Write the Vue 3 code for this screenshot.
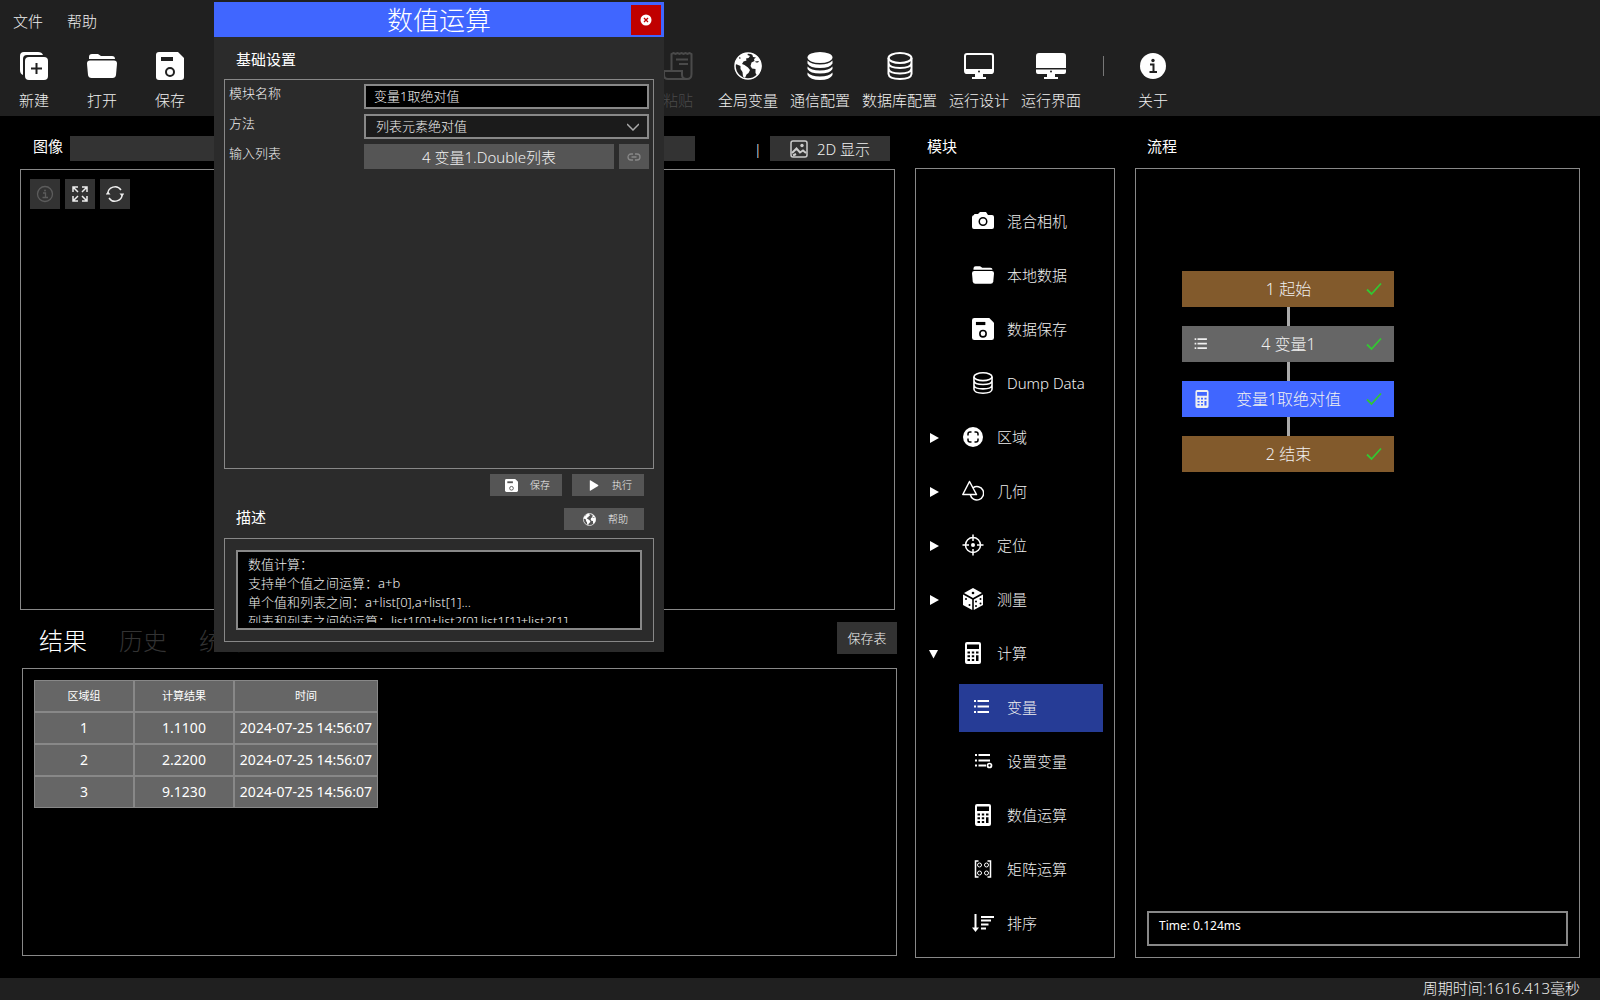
<script setup>
import { ref } from 'vue'

const menus = ['文件', '帮助']
const fileTools = [
  { icon: 'new', label: '新建' },
  { icon: 'folder', label: '打开' },
  { icon: 'save', label: '保存' }
]
const systemTools = [
  { icon: 'paste', label: '粘贴', disabled: true },
  { icon: 'globe', label: '全局变量' },
  { icon: 'db-solid', label: '通信配置' },
  { icon: 'db', label: '数据库配置' },
  { icon: 'monitor', label: '运行设计' },
  { icon: 'monitor-solid', label: '运行界面' }
]
const modules = [
  { icon: 'camera', label: '混合相机', child: true },
  { icon: 'folder', label: '本地数据', child: true },
  { icon: 'save', label: '数据保存', child: true },
  { icon: 'db', label: 'Dump Data', child: true },
  { icon: 'region', label: '区域' },
  { icon: 'shapes', label: '几何' },
  { icon: 'target', label: '定位' },
  { icon: 'dice', label: '测量' },
  { icon: 'calc', label: '计算', open: true },
  { icon: 'list', label: '变量', child: true },
  { icon: 'list-gear', label: '设置变量', child: true },
  { icon: 'calc', label: '数值运算', child: true },
  { icon: 'matrix', label: '矩阵运算', child: true },
  { icon: 'sort', label: '排序', child: true }
]
const selectedModule = ref('变量')
const nodes = [
  { label: '1 起始', kind: 'edge' },
  { label: '4 变量1', kind: 'step', icon: 'list' },
  { label: '变量1取绝对值', kind: 'active', icon: 'calc' },
  { label: '2 结束', kind: 'edge' }
]
const results = [
  { id: 1, value: '1.1100', time: '2024-07-25 14:56:07' },
  { id: 2, value: '2.2200', time: '2024-07-25 14:56:07' },
  { id: 3, value: '9.1230', time: '2024-07-25 14:56:07' }
]
const tabs = ['结果', '历史', '统计']
const activeTab = ref('结果')
const moduleName = ref('变量1取绝对值')
const description = ref(
  '数值计算：\n支持单个值之间运算：a+b\n单个值和列表之间：a+list[0],a+list[1]...\n列表和列表之间的运算：list1[0]+list2[0],list1[1]+list2[1]'
)
</script>

<template>
  <svg class="sprite" aria-hidden="true">
    <symbol id="i-new" viewBox="0 0 28 28">
      <path fill="currentColor" d="M3 23Q0 22 0 18V4Q0 0 4 0H18Q22 0 23 3H7Q3 3 3 7Z" />
      <rect x="5" y="5" width="23" height="23" rx="4" fill="currentColor" />
      <path stroke="var(--cut)" stroke-width="2" d="M16.500 11v11M11 16.500h11" />
    </symbol>
    <symbol id="i-folder" viewBox="0 0 30 28">
      <path fill="currentColor" d="M2 7V5Q2 2 5 2H11L14 4H25Q28 4 28 7Z" />
      <path fill="currentColor" d="M3 8.500H27Q30 8.500 30 11.500L29 23Q28.500 26 25.500 26H4.500Q1.500 26 1 23L0 11.500Q0 8.500 3 8.500Z" />
    </symbol>
    <symbol id="i-save" viewBox="0 0 28 28">
      <path fill="currentColor" d="M3 0H22L28 6V25Q28 28 25 28H3Q0 28 0 25V3Q0 0 3 0Z" />
      <path fill="var(--cut)" d="M5 5H17V9H5Z" />
      <circle cx="14" cy="20" r="4" fill="none" stroke="var(--cut)" stroke-width="2" />
    </symbol>
    <symbol id="i-paste" viewBox="0 0 30 28">
      <path fill="none" stroke="currentColor" stroke-width="2" d="M8.500 18V2l2-1 2 1 2-1 2 1 2-1 2 1 2-1 2 1 2-1 2 1V22Q28.500 27 24 27H5Q1 27 1 23V19H19V23Q19 27 24 27M13 7.500H25M16 12H25" />
    </symbol>
    <symbol id="i-globe" viewBox="0 0 28 28">
      <circle cx="14" cy="14" r="13" fill="none" stroke="currentColor" stroke-width="1.500" />
      <path fill="currentColor" d="M1 12Q3 4 10 1.500L14 1L13.500 3L16 4L14.500 6L12 6.500L12.500 8.500L9.500 9.500L8 12L10.500 13L14 15.500L16 18L14.500 21L12.500 22.500L11 26L9 24.500L8.500 20L6.500 17L6.500 14L3 12.500Z" />
      <path fill="currentColor" d="M18 1.500Q25 4 27 11L27.500 14Q27 20 23 23.500L21.500 21L21.500 17L18 16.500L16.500 14L17.500 10.500L20.500 9L20 7L22 5.500L19 5Z" />
      <path fill="var(--cut)" d="M21 9.500L25 9L24 10.500L22 10.500ZM5 5L7 6L5.500 7Z" />
    </symbol>
    <symbol id="i-db-solid" viewBox="0 0 26 28">
      <ellipse cx="13" cy="5.500" rx="12.500" ry="5.500" fill="currentColor" />
      <path fill="currentColor" d="M.5 8.500Q4 12.500 13 12.500T25.500 8.500V11.500Q23 16 13 16T.5 11.500ZM.5 14.500Q4 18.500 13 18.500T25.500 14.500V17Q23 21.500 13 21.500T.5 17ZM.5 20.500Q4 24.500 13 24.500T25.500 20.500V23Q23 28 13 28T.5 23Z" />
    </symbol>
    <symbol id="i-db" viewBox="0 0 26 28">
      <g fill="none" stroke="currentColor" stroke-width="2">
        <ellipse cx="13" cy="6" rx="11.500" ry="5" />
        <path d="M1.500 6V22Q2 27 13 27T24.500 22V6M1.500 11Q2 16 13 16T24.500 11M1.500 16.500Q2 21.500 13 21.500T24.500 16.500" />
      </g>
    </symbol>
    <symbol id="i-monitor" viewBox="0 0 30 28">
      <rect x="1" y="2" width="28" height="19" rx="2" fill="none" stroke="currentColor" stroke-width="2" />
      <path fill="currentColor" d="M1 17H29V20Q29 22 27 22H3Q1 22 1 20ZM11 22H19V25H22V27H8V25H11Z" />
      <circle cx="15" cy="19.500" r="1" fill="var(--cut)" />
    </symbol>
    <symbol id="i-monitor-solid" viewBox="0 0 30 28">
      <path fill="currentColor" d="M3 1H27Q30 1 30 4V16H0V4Q0 1 3 1ZM0 17.500H30V20Q30 22 28 22H2Q0 22 0 20ZM11 22H19V25H22V27H8V25H11Z" />
      <circle cx="15" cy="19.500" r="1" fill="var(--cut)" />
    </symbol>
    <symbol id="i-info" viewBox="0 0 28 28">
      <circle cx="14" cy="14" r="13" fill="currentColor" />
      <circle cx="14" cy="8.500" r="1.700" fill="var(--cut)" />
      <path fill="none" stroke="var(--cut)" stroke-width="2" d="M11 12.500H14.500V19.500M10.500 20H18" />
    </symbol>
    <symbol id="i-info-line" viewBox="0 0 18 18">
      <g fill="none" stroke="currentColor" stroke-width="1.300">
        <circle cx="9" cy="9" r="7.500" />
        <path d="M7 8H9.500V12.500M6.500 12.500H12" />
      </g>
      <circle cx="9" cy="5.500" r="1" fill="currentColor" />
    </symbol>
    <symbol id="i-expand" viewBox="0 0 18 18">
      <path fill="none" stroke="currentColor" stroke-width="1.500" d="M7 7L2 2M2 7V2H7M11 7L16 2M11 2H16V7M7 11L2 16M2 11V16H7M11 11L16 16M16 11V16H11" />
    </symbol>
    <symbol id="i-refresh" viewBox="0 0 18 18">
      <path fill="none" stroke="currentColor" stroke-width="1.400" d="M1.800 9A7.200 7.200 0 0 1 15 5M16.200 9A7.200 7.200 0 0 1 3 13" />
      <path fill="currentColor" d="M-.5 9.500H4.500L2 6.500ZM13.500 8.500H18.500L16 11.500Z" />
    </symbol>
    <symbol id="i-image" viewBox="0 0 18 18">
      <rect x="1" y="1" width="16" height="16" rx="2" fill="none" stroke="currentColor" stroke-width="1.500" />
      <circle cx="12" cy="5.500" r="1.700" fill="currentColor" />
      <path fill="none" stroke="currentColor" stroke-width="2" d="M2 13L6.500 8.500L10 12.500L13 10.500L16 13M3 15.500L6 14" />
    </symbol>
    <symbol id="i-camera" viewBox="0 0 22 22">
      <path fill="currentColor" fill-rule="evenodd" d="M2 5Q2 3.500 3.500 4H6L8 2H14L16 5H20Q22 5 22 7V17Q22 19 20 19H2Q0 19 0 17V7Q0 5.500 2 5ZM11 7A4.500 4.500 0 1 0 11 16A4.500 4.500 0 1 0 11 7Z" />
      <circle cx="11" cy="11.500" r="3" fill="currentColor" />
    </symbol>
    <symbol id="i-region" viewBox="0 0 22 22">
      <circle cx="11" cy="11" r="10" fill="currentColor" />
      <path fill="none" stroke="var(--cut)" stroke-width="1.500" d="M6 9.500V8Q6 6 8 6H9.500M12.500 6H14Q16 6 16 8V9.500M16 12.500V14Q16 16 14 16H12.500M9.500 16H8Q6 16 6 14V12.500" />
    </symbol>
    <symbol id="i-shapes" viewBox="0 0 22 22">
      <g fill="none" stroke="currentColor" stroke-width="1.500">
        <path d="M7.500 1.500L14.500 14.500H.8Z" stroke-linejoin="round" />
        <path d="M11 7.800A6.700 6.700 0 1 1 8.300 14.500" />
      </g>
    </symbol>
    <symbol id="i-target" viewBox="0 0 22 22">
      <g fill="none" stroke="currentColor" stroke-width="1.500">
        <circle cx="11" cy="11" r="7.500" />
        <path d="M11 .5V7M11 15V21.500M.5 11H7M15 11H21.500" />
      </g>
      <circle cx="11" cy="11" r="2" fill="currentColor" />
    </symbol>
    <symbol id="i-dice" viewBox="0 0 22 22">
      <path fill="currentColor" d="M11 0L20 5L11 10L2 5ZM1 6.500L10.200 11.500V22L1 17ZM21 6.500L11.800 11.500V22L21 17Z" />
      <g fill="var(--cut)">
        <circle cx="11" cy="5" r="1.300" /><circle cx="4" cy="11" r="1" /><circle cx="7.500" cy="17" r="1" />
        <circle cx="14" cy="13.500" r="1" /><circle cx="18.500" cy="11" r="1" /><circle cx="14" cy="18" r="1" /><circle cx="18.500" cy="15.500" r="1" />
      </g>
    </symbol>
    <symbol id="i-calc" viewBox="0 0 22 22">
      <path fill="currentColor" fill-rule="evenodd" d="M5 0H17Q19 0 19 2V20Q19 22 17 22H5Q3 22 3 20V2Q3 0 5 0ZM5 2.500V7H17V2.500ZM5.500 9.500V11.500H8V9.500ZM9.800 9.500V11.500H12.200V9.500ZM14 9.500V11.500H16.500V9.500ZM5.500 13.300V15.300H8V13.300ZM9.800 13.300V15.300H12.200V13.300ZM5.500 17V19H8V17ZM9.800 17V19H12.200V17ZM14 13.300V19H16.500V13.300Z" />
    </symbol>
    <symbol id="i-list" viewBox="0 0 22 22">
      <path stroke="currentColor" stroke-width="2" d="M2 5H4M2 10.500H4M2 16H4M5.500 5H17M5.500 10.500H17M5.500 16H17" />
    </symbol>
    <symbol id="i-list-gear" viewBox="0 0 22 22">
      <path stroke="currentColor" stroke-width="2" d="M3 5H5M3 10.500H5M3 15.500H5M6.500 5H18M6.500 10.500H18M6.500 15.500H14" />
      <circle cx="17.500" cy="15.500" r="2" fill="none" stroke="currentColor" stroke-width="1.700" />
    </symbol>
    <symbol id="i-matrix" viewBox="0 0 22 22">
      <g fill="none" stroke="currentColor">
        <path stroke-width="1.500" d="M6.500 3H3.500V19H6.500M15.500 3H18.500V19H15.500" />
        <circle cx="7.500" cy="7" r="2" /><circle cx="14.500" cy="7" r="2" />
        <circle cx="7.500" cy="15" r="2" /><circle cx="14.500" cy="15" r="2" />
      </g>
    </symbol>
    <symbol id="i-sort" viewBox="0 0 22 22">
      <path stroke="currentColor" stroke-width="2" d="M3.500 2V17M9 5H22M9 8.500H19M9 12.500H16.500M9 16.500H14" />
      <path fill="currentColor" d="M0 15.500H7L3.500 20Z" />
    </symbol>
    <symbol id="i-play" viewBox="0 0 14 14"><path fill="currentColor" d="M3 2Q3 1 4 1.500L12 6.500Q12.500 7 12 7.500L4 12.500Q3 13 3 12Z" /></symbol>
    <symbol id="i-close" viewBox="0 0 12 12">
      <circle cx="6" cy="6" r="5.500" fill="currentColor" />
      <path stroke="var(--cut)" stroke-width="1.300" d="M4 4L8 8M8 4L4 8" />
    </symbol>
    <symbol id="i-link" viewBox="0 0 14 14">
      <path fill="none" stroke="currentColor" stroke-width="1.300" d="M6 4H4A3 3 0 0 0 4 10H6M8 4H10A3 3 0 0 1 10 10H8M4.500 7H9.500" />
    </symbol>
    <symbol id="i-check" viewBox="0 0 16 14">
      <path fill="none" stroke="currentColor" stroke-width="1.800" d="M1 7.500L5.500 12L15 1.500" />
    </symbol>
  </svg>

  <div class="app">
    <header class="top">
      <nav class="menu">
        <button v-for="m in menus" :key="m" type="button">{{ m }}</button>
      </nav>
      <div class="tools">
        <button v-for="t in fileTools" :key="t.label" type="button" class="tool">
          <svg><use :href="'#i-' + t.icon" /></svg><span>{{ t.label }}</span>
        </button>
        <span class="tool-space"></span>
        <button v-for="t in systemTools" :key="t.label" type="button" class="tool" :disabled="t.disabled">
          <svg><use :href="'#i-' + t.icon" /></svg><span>{{ t.label }}</span>
        </button>
        <span class="divider"></span>
        <button type="button" class="tool">
          <svg><use href="#i-info" /></svg><span>关于</span>
        </button>
      </div>
    </header>

    <main class="work">
      <section class="left">
        <div class="bar">
          <label class="title" for="image-source">图像</label>
          <select id="image-source" class="source"></select>
          <span class="pipe">|</span>
          <button type="button" class="view"><svg><use href="#i-image" /></svg>2D 显示</button>
        </div>
        <div class="panel canvas">
          <button type="button" aria-label="信息" disabled><svg><use href="#i-info-line" /></svg></button>
          <button type="button" aria-label="适应窗口"><svg><use href="#i-expand" /></svg></button>
          <button type="button" aria-label="刷新"><svg><use href="#i-refresh" /></svg></button>
        </div>
        <div class="lower">
          <div class="tabs">
            <button
              v-for="t in tabs"
              :key="t"
              type="button"
              class="tab"
              :class="{ on: t === activeTab }"
              @click="activeTab = t"
            >{{ t }}</button>
            <button type="button" class="save-table">保存表</button>
          </div>
          <div class="panel results">
            <table>
              <thead>
                <tr><th class="narrow">区域组</th><th class="narrow">计算结果</th><th class="wide">时间</th></tr>
              </thead>
              <tbody>
                <tr v-for="r in results" :key="r.id">
                  <td>{{ r.id }}</td><td>{{ r.value }}</td><td>{{ r.time }}</td>
                </tr>
              </tbody>
            </table>
          </div>
        </div>
      </section>

      <section class="column">
        <h2 class="title">模块</h2>
        <ul class="panel tree">
          <li v-for="m in modules" :key="m.label">
            <button
              type="button"
              class="row"
              :class="{ child: m.child, selected: m.child && m.label === selectedModule }"
              @click="m.child && (selectedModule = m.label)"
            >
              <svg v-if="!m.child" class="arrow" viewBox="0 0 10 10">
                <path fill="currentColor" :d="m.open ? 'M0 1H9L4.500 9.500Z' : 'M1 0L10 5L1 10Z'" />
              </svg>
              <svg class="icon"><use :href="'#i-' + m.icon" /></svg>
              <span>{{ m.label }}</span>
            </button>
          </li>
        </ul>
      </section>

      <section class="column">
        <h2 class="title">流程</h2>
        <div class="panel flow">
          <ol class="nodes">
            <li v-for="n in nodes" :key="n.label" class="node" :class="n.kind">
              <svg class="node-icon"><use v-if="n.icon" :href="'#i-' + n.icon" /></svg>
              <span>{{ n.label }}</span>
              <svg class="check"><use href="#i-check" /></svg>
            </li>
          </ol>
          <div class="time">Time: 0.124ms</div>
        </div>
      </section>
    </main>

    <footer class="status">周期时间:1616.413毫秒</footer>

    <div class="dialog" role="dialog" aria-labelledby="dialog-title">
      <div class="dialog-head">
        <h1 id="dialog-title">数值运算</h1>
        <button type="button" class="close" aria-label="关闭"><svg><use href="#i-close" /></svg></button>
      </div>
      <h2 class="title section">基础设置</h2>
      <form class="group settings" @submit.prevent>
        <label for="name">模块名称</label>
        <input id="name" v-model="moduleName" type="text" />
        <label for="method">方法</label>
        <div class="select">
          <select id="method"><option>列表元素绝对值</option></select>
          <svg viewBox="0 0 12 8"><path d="M0 1L6 7L12 1" fill="none" stroke="currentColor" stroke-width="1.500" /></svg>
        </div>
        <label for="list">输入列表</label>
        <div class="pick">
          <button id="list" type="button" class="value">4 变量1.Double列表</button>
          <button type="button" class="link" aria-label="链接" disabled><svg><use href="#i-link" /></svg></button>
        </div>
      </form>
      <div class="actions">
        <button type="button"><svg><use href="#i-save" /></svg>保存</button>
        <button type="button"><svg><use href="#i-play" /></svg>执行</button>
      </div>
      <div class="about">
        <h2 class="title" id="desc-title">描述</h2>
        <button type="button" class="help"><svg><use href="#i-globe" /></svg>帮助</button>
      </div>
      <div class="group desc">
        <div class="desc-box">
          <textarea v-model="description" readonly aria-labelledby="desc-title"></textarea>
        </div>
      </div>
    </div>
  </div>
</template>

<style>
body {
  margin: 0;
  background: #000;
}
</style>

<style scoped>
.sprite {
  position: absolute;
  width: 0;
  height: 0;
}
.app {
  --cut: #000;
  position: relative;
  display: flex;
  flex-direction: column;
  min-height: 100vh;
  overflow: hidden;
  background: #000;
  color: #f0f0f0;
  font: 300 15px/20px "Noto Sans", "Noto Sans CJK SC", sans-serif;
}
.app *,
.app *::before {
  box-sizing: border-box;
}
button,
input,
select,
textarea {
  margin: 0;
  padding: 0;
  border: 0;
  border-radius: 0;
  background: none;
  color: inherit;
  font: inherit;
}
h1,
h2,
ul,
ol {
  margin: 0;
  padding: 0;
  list-style: none;
}
svg {
  flex: none;
}
.title {
  color: #fff;
  font-size: 15px;
  font-weight: 400;
}
.panel {
  border: 1px solid #888;
}

.top {
  --cut: #202020;
  height: 116px;
  background: #202020;
}
.menu {
  display: flex;
  gap: 24px;
  height: 52px;
  padding: 11px 12px 21px 13px;
}
.tools {
  display: flex;
  gap: 12px;
  padding-left: 6px;
}
.tool {
  display: flex;
  flex: none;
  flex-direction: column;
  align-items: center;
  gap: 10px;
  min-width: 56px;
  white-space: nowrap;
}
.tool svg {
  width: 30px;
  height: 28px;
  color: #fff;
}
.tool:disabled,
.tool:disabled svg {
  color: #4a4a4a;
}
.tool-space {
  flex: 0 0 428px;
}
.divider {
  flex: none;
  width: 1px;
  height: 20px;
  margin: 4px 9px 0 10px;
  background: #777;
}

.work {
  display: grid;
  flex: 1;
  grid-template-columns: minmax(0, 875fr) 200px minmax(0, 445fr);
  gap: 20px;
  padding: 0 20px 20px;
}
.left,
.column,
.lower {
  display: flex;
  flex-direction: column;
}
.bar {
  display: flex;
  align-items: center;
  height: 53px;
  padding: 12px 5px 0 13px;
}
.bar .title {
  margin: 0 7px 6px 0;
}
.source {
  flex: 0 1 625px;
  align-self: flex-start;
  height: 25px;
  margin-top: 8px;
  background: #333;
  appearance: none;
}
.pipe {
  margin: 0 8px 0 auto;
}
.view {
  display: flex;
  align-items: center;
  align-self: flex-start;
  justify-content: center;
  gap: 9px;
  width: 120px;
  height: 25px;
  margin-top: 8px;
  background: #333;
}
.view svg {
  width: 18px;
  height: 18px;
  color: #ccc;
}
.canvas {
  display: flex;
  flex: 1;
  gap: 5px;
  padding: 9px;
}
.canvas button {
  display: grid;
  place-items: center;
  width: 30px;
  height: 30px;
  background: #333;
}
.canvas svg {
  width: 18px;
  height: 18px;
  color: #eee;
  overflow: visible;
}
.canvas :disabled svg {
  color: #5c5c5c;
}
.lower {
  margin: 0 -2px 2px 2px;
}
.tabs {
  display: flex;
  align-items: center;
  gap: 32px;
  height: 58px;
  padding-left: 17px;
}
.tab {
  padding-top: 4px;
  color: #333;
  font-size: 24px;
  line-height: 32px;
}
.tab.on {
  color: #fff;
}
.save-table {
  width: 60px;
  height: 32px;
  margin: 0 0 2px auto;
  background: #333;
  font-size: 13px;
}
.results {
  height: 288px;
  padding: 11px;
}
table {
  border-collapse: separate;
  border-spacing: 0;
  background: #666;
  color: #fff;
  font-size: 14px;
  font-weight: 400;
  text-align: center;
}
th,
td {
  height: 32px;
  padding: 0;
  border: 1px solid #888;
}
th {
  font-size: 11px;
  font-weight: 400;
}
.narrow {
  width: 100px;
}
.wide {
  width: 144px;
}

.column .title {
  height: 52px;
  padding: 20px 12px 0;
}
.tree {
  flex: 1;
  padding-top: 29px;
}
.tree li {
  padding-bottom: 6px;
}
.tree li:last-child {
  padding-bottom: 0;
}
.row {
  display: flex;
  align-items: center;
  width: 100%;
  height: 48px;
  padding: 0 0 2px 13px;
  white-space: nowrap;
}
.row.child {
  width: 144px;
  margin-left: 43px;
}
.row.selected {
  background: #263c96;
}
.arrow {
  width: 10px;
  height: 10px;
  margin: 2px 23px 0 0;
  color: #fff;
}
.icon {
  width: 22px;
  height: 22px;
  margin-right: 13px;
  color: #fff;
}
.flow {
  display: flex;
  flex: 1;
  flex-direction: column;
  justify-content: space-between;
  padding: 102px 11px 11px;
}
.nodes {
  width: 212px;
  margin-left: 35px;
}
.node {
  position: relative;
  display: flex;
  align-items: center;
  justify-content: space-between;
  height: 36px;
  padding: 0 12px 0 11px;
  font-size: 16px;
}
.node + .node {
  margin-top: 19px;
}
.node + .node::before {
  position: absolute;
  top: -19px;
  left: 105px;
  width: 3px;
  height: 19px;
  background: #aaa;
  content: "";
}
.node.edge {
  background: #825a2c;
}
.node.step {
  background: #666;
}
.node.active {
  background: #4066ff;
}
.node-icon {
  width: 18px;
  height: 18px;
}
.check {
  width: 16px;
  height: 14px;
  color: #32c832;
}
.time {
  height: 35px;
  padding: 3px 10px;
  border: 2px solid #888;
  color: #fff;
  font-size: 12px;
  font-weight: 400;
}
.status {
  height: 22px;
  padding: 0 20px;
  background: #202020;
  text-align: right;
}

.dialog {
  --cut: #555;
  position: absolute;
  top: 2px;
  left: 214px;
  width: 450px;
  padding-bottom: 10px;
  background: #2b2b2b;
}
.dialog-head {
  --cut: #c00000;
  display: grid;
  grid-template-columns: 33px 1fr 33px;
  align-items: center;
  height: 35px;
  background: #4066ff;
}
.dialog-head h1 {
  grid-column: 2;
  padding-top: 2px;
  color: #fff;
  font-size: 26px;
  font-weight: 300;
  line-height: 33px;
  text-align: center;
}
.close {
  display: grid;
  place-items: center;
  width: 30px;
  height: 30px;
  background: #c00000;
}
.close svg {
  width: 12px;
  height: 12px;
  color: #fff;
}
.section {
  height: 42px;
  padding: 12px 22px 0;
}
.group {
  margin: 0 10px;
  border: 1px solid #888;
}
.settings {
  display: grid;
  grid-template-columns: 135px 1fr;
  grid-auto-rows: 25px;
  gap: 5px 0;
  height: 390px;
  padding: 4px;
  font-size: 13px;
}
.settings label {
  line-height: 18px;
}
.settings input,
.settings select {
  width: 100%;
  height: 25px;
  border: 2px solid #888;
  padding: 0 8px 2px;
}
.settings input {
  background: #000;
}
.select {
  display: grid;
  align-items: center;
}
.select > * {
  grid-area: 1 / 1;
}
.select select {
  padding: 0 10px 2px;
  background: #1b1b1b;
  appearance: none;
}
.select svg {
  justify-self: end;
  width: 12px;
  height: 8px;
  margin-right: 10px;
  color: #aaa;
}
.pick {
  display: flex;
  gap: 5px;
}
.value,
.link {
  background: #555;
}
.value {
  flex: 1;
  font-size: 15px;
}
.link {
  display: grid;
  place-items: center;
  width: 30px;
}
.link svg {
  width: 14px;
  height: 14px;
  color: #888;
}
.actions {
  display: flex;
  justify-content: flex-end;
  gap: 10px;
  padding: 5px 20px 0;
}
.actions button,
.help {
  display: flex;
  align-items: center;
  justify-content: flex-end;
  gap: 12px;
  width: 72px;
  height: 22px;
  padding-right: 12px;
  background: #555;
  font-size: 10px;
}
.actions svg,
.help svg {
  width: 13px;
  height: 13px;
  color: #fff;
}
.about {
  display: flex;
  align-items: center;
  justify-content: space-between;
  height: 42px;
  padding: 4px 20px 0 22px;
}
.about .title {
  padding-bottom: 4px;
}
.help {
  width: 80px;
  padding-right: 16px;
}
.desc {
  height: 104px;
  padding: 11px;
}
.desc-box {
  height: 80px;
  padding: 3px 5px 5px 10px;
  border: 2px solid #888;
  background: #000;
}
textarea {
  display: block;
  width: 100%;
  height: 68px;
  overflow: hidden;
  resize: none;
  font-size: 13px;
  line-height: 19px;
}
</style>
